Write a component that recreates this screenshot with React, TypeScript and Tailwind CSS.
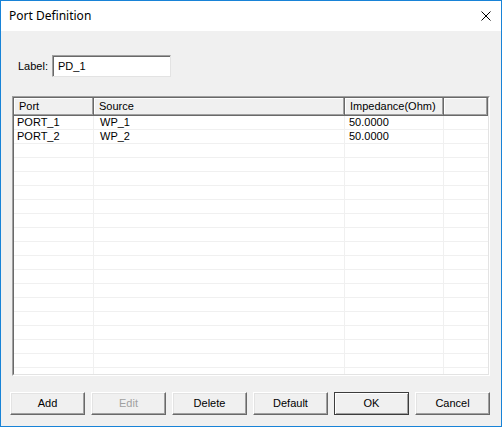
import React from "react";

const rows = [
  ["PORT_1", "WP_1", "50.0000"],
  ["PORT_2", "WP_2", "50.0000"],
];

function Btn({ label, disabled, def }: { label: string; disabled?: boolean; def?: boolean }) {
  return (
    <div
      className={
        "w-[75px] h-[23px] flex items-center justify-center bg-[#f0f0f0] " +
        (def
          ? "border border-[#3c3c3c] shadow-[inset_1px_1px_0_#fff,inset_-1px_-1px_0_#a0a0a0]"
          : "border border-t-white border-l-white border-r-[#696969] border-b-[#696969] shadow-[inset_-1px_-1px_0_#a0a0a0,inset_1px_1px_0_#e3e3e3]") +
        (disabled ? " text-[#a0a0a0]" : " text-black")
      }
    >
      {label}
    </div>
  );
}

export default function App() {
  const empty = Array.from({ length: 19 });
  const widths = ["w-[80px]", "w-[251px]", "w-[99px]"];
  const pads = ["pl-[3px]", "pl-[6px]", "pl-[4px]"];
  return (
    <div
      className="w-[502px] h-[427px] border border-[#1883d7] bg-[#f0f0f0] flex flex-col text-[11px] text-black overflow-hidden"
      style={{ fontFamily: "Tahoma, 'Liberation Sans', sans-serif" }}
    >
      <div className="h-[30px] bg-white flex items-center justify-between pl-[8px] pr-[10px] shrink-0">
        <span className="text-[12px]" style={{ fontFamily: "'Noto Sans', 'Liberation Sans', sans-serif" }}>
          Port Definition
        </span>
        <svg width="10" height="10" viewBox="0 0 10 10">
          <path d="M0.5 0.5 L9.5 9.5 M9.5 0.5 L0.5 9.5" stroke="#000" strokeWidth="1" />
        </svg>
      </div>
      <div className="flex flex-col px-[11px]">
        <div className="flex items-center mt-[24px] pl-[6px] h-[22px]">
          <span className="w-[34px]">Label:</span>
          <div className="w-[119px] h-[22px] bg-white border border-t-[#a0a0a0] border-l-[#a0a0a0] border-r-[#e3e3e3] border-b-[#e3e3e3] shadow-[inset_1px_1px_0_#696969] flex items-center pl-[5px]">
            PD_1
          </div>
        </div>
        <div className="mt-[19px] h-[280px] border border-t-[#a0a0a0] border-l-[#a0a0a0] border-r-white border-b-white">
          <div className="h-full border border-t-[#696969] border-l-[#696969] border-r-[#e3e3e3] border-b-[#e3e3e3] bg-white overflow-hidden flex flex-col">
            <div className="flex h-[18px] shrink-0">
              {["Port", "Source", "Impedance(Ohm)", ""].map((h, i) => (
                <div
                  key={i}
                  className={
                    (i < 3 ? widths[i] + " shrink-0" : "flex-1") +
                    " h-full bg-[#f0f0f0] border-r border-b border-[#696969] shadow-[inset_-1px_-1px_0_#a0a0a0,inset_1px_1px_0_#fff] flex items-center pl-[5px]"
                  }
                >
                  {h}
                </div>
              ))}
            </div>
            {[...rows, ...empty.map(() => ["", "", ""])].map((r, ri) => (
              <div key={ri} className="flex h-[14px] shrink-0 border-b border-[#f0f0f0]">
                {r.map((c, ci) => (
                  <div
                    key={ci}
                    className={widths[ci] + " " + pads[ci] + " shrink-0 h-full border-r border-[#f0f0f0] flex items-center leading-none"}
                  >
                    {c}
                  </div>
                ))}
                <div className="flex-1 h-full" />
              </div>
            ))}
          </div>
        </div>
      </div>
      <div className="flex gap-[6px] pl-[9px] mt-[16px]">
        <Btn label="Add" />
        <Btn label="Edit" disabled />
        <Btn label="Delete" />
        <Btn label="Default" />
        <Btn label="OK" def />
        <Btn label="Cancel" />
      </div>
    </div>
  );
}
